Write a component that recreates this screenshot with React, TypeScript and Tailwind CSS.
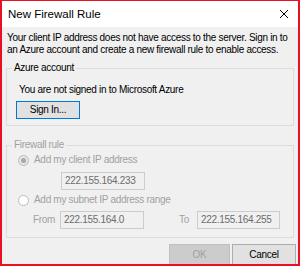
export default function App() {
  return (
    <div className="flex h-[266px] w-[300px] flex-col overflow-hidden border-x-2 border-t border-b-2 border-[#e81123] bg-[#f0f0f0] font-['Liberation_Sans',Arial,sans-serif] text-[10px] leading-[12px] tracking-[-0.3px] text-black">
      {/* Title bar */}
      <div className="flex h-[26px] shrink-0 items-center justify-between bg-white pl-[6px] pr-[9px]">
        <span className="text-[11.5px] tracking-normal">New Firewall Rule</span>
        <svg width="10" height="10" viewBox="0 0 10 10" className="text-black">
          <path d="M1 1 L9 9 M9 1 L1 9" stroke="currentColor" strokeWidth="1" fill="none" />
        </svg>
      </div>

      <div className="flex flex-1 flex-col px-[4px]">
        <p className="pl-[1px] pt-[5px]">
          Your client IP address does not have access to the server. Sign in to an Azure account and create a new
          firewall rule to enable access.
        </p>

        {/* Azure account */}
        <fieldset className="mt-[6px] border border-[#dcdcdc] pb-[6px] pl-[9px] pt-[10px]">
          <legend className="ml-[-4px] px-[2px]">Azure account</legend>
          <div className="ml-[3px]">You are not signed in to Microsoft Azure</div>
          <button className="mt-[5px] flex h-[18px] w-[64px] items-center justify-center border border-[#0078d7] bg-[#e1e1e1]">
            Sign In...
          </button>
        </fieldset>

        {/* Firewall rule */}
        <fieldset className="mt-[13px] border border-[#dcdcdc] pb-[8px] pl-[11px] pt-[3px] text-[#a0a0a0]">
          <legend className="ml-[-6px] px-[2px]">Firewall rule</legend>
          <div className="flex items-center gap-[5px]">
            <span className="flex h-[11px] w-[11px] items-center justify-center rounded-full border border-[#bcbcbc] bg-[#e6e6e6]">
              <span className="h-[5px] w-[5px] rounded-full bg-[#a8a8a8]" />
            </span>
            <span>Add my client IP address</span>
          </div>
          <div className="mt-[6px] ml-[43px] flex h-[18px] w-[84px] items-center border border-[#cccccc] bg-[#f0f0f0] pl-[3px] text-[#6d6d6d]">
            222.155.164.233
          </div>
          <div className="mt-[4px] flex items-center gap-[5px]">
            <span className="h-[11px] w-[11px] rounded-full border border-[#bcbcbc] bg-white" />
            <span>Add my subnet IP address range</span>
          </div>
          <div className="mt-[5px] flex items-center">
            <span className="ml-[15px] w-[27px]">From</span>
            <div className="flex h-[18px] w-[84px] items-center border border-[#cccccc] bg-[#f0f0f0] pl-[3px] text-[#6d6d6d]">
              222.155.164.0
            </div>
            <span className="ml-[35px] w-[18px]">To</span>
            <div className="flex h-[18px] w-[83px] items-center border border-[#cccccc] bg-[#f0f0f0] pl-[3px] text-[#6d6d6d]">
              222.155.164.255
            </div>
          </div>
        </fieldset>

        {/* Buttons */}
        <div className="mt-[6px] flex justify-end gap-[2px]">
          <button className="h-[21px] w-[61px] border border-[#bfbfbf] bg-[#cccccc] text-[#a0a0a0]">OK</button>
          <button className="-mr-[2px] h-[21px] w-[64px] border border-[#adadad] bg-[#e1e1e1]">Cancel</button>
        </div>
      </div>
    </div>
  );
}
